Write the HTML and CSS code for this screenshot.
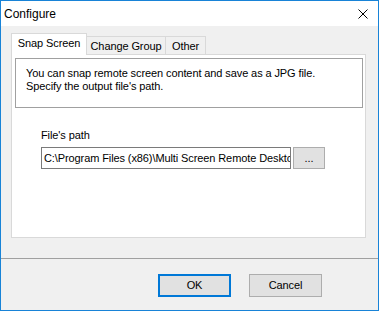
FILE: index.html
```html
<!DOCTYPE html>
<html lang="en">
<head>
    <meta charset="UTF-8">
    <title>Configure</title>
    <link rel="stylesheet" href="styles.css">
</head>
<body>
    <div class="window">
        <div class="titlebar">
            <span class="title">Configure</span>
            <svg class="close" width="10" height="10" viewBox="0 0 10 10">
                <path d="M0.5 0.5 L9.5 9.5 M9.5 0.5 L0.5 9.5" stroke="#000" stroke-width="1" fill="none"/>
            </svg>
        </div>
        <div class="client">
            <div class="tabs">
                <div class="tab active">Snap Screen</div>
                <div class="tab tab-change">Change Group</div>
                <div class="tab tab-other">Other</div>
            </div>
            <div class="panel">
                <div class="info">
                    <p>You can snap remote screen content and save as a JPG file.</p>
                    <p>Specify the output file's path.</p>
                </div>
                <div class="field">
                    <label>File's path</label>
                    <div class="field-row">
                        <div class="input">C:\Program Files (x86)\Multi Screen Remote Deskto</div>
                        <div class="btn btn-browse">...</div>
                    </div>
                </div>
            </div>
        </div>
        <div class="footer">
            <div class="btn btn-ok">OK</div>
            <div class="btn btn-cancel">Cancel</div>
        </div>
    </div>
</body>
</html>
```

FILE: styles.css
```css
* {
    margin: 0;
    box-sizing: border-box;
}

body {
    font-family: 'Liberation Sans', Arial, sans-serif;
    font-size: 11px;
    letter-spacing: -0.1px;
    color: #000;
    background: #fff;
}

.window {
    width: 379px;
    height: 311px;
    border: 1px solid #1883d7;
    background: #f0f0f0;
    display: flex;
    flex-direction: column;
}

.titlebar {
    height: 25px;
    background: #fff;
    display: flex;
    align-items: center;
    justify-content: space-between;
    padding: 0 10px 0 3px;
}

.title {
    font-size: 12px;
    letter-spacing: 0;
    line-height: 14px;
}

.close {
    display: block;
}

.client {
    padding: 6px 12px 0 10px;
}

.tabs {
    display: flex;
    align-items: flex-end;
    height: 22px;
    position: relative;
    z-index: 1;
}

.tab {
    height: 18px;
    border: 1px solid #d9d9d9;
    border-bottom: none;
    background: #f0f0f0;
    line-height: 18px;
    white-space: nowrap;
    text-align: center;
}

.tab.active {
    height: 22px;
    width: 76px;
    margin-bottom: -1px;
    background: #fff;
    line-height: 19px;
}

.tab-change {
    width: 79px;
    border-left: none;
}

.tab-other {
    width: 40px;
    border-left: none;
}

.panel {
    height: 184px;
    border: 1px solid #d9d9d9;
    background: #fff;
    padding: 3px 2px 0 3px;
}

.info {
    height: 50px;
    border: 1px solid #a0a0a0;
    padding: 8px 0 0 10px;
    line-height: 13px;
}

.field {
    padding-left: 26px;
    margin-top: 20px;
}

.field label {
    display: block;
    line-height: 14px;
    margin-bottom: 5px;
}

.field-row {
    display: flex;
    gap: 2px;
}

.input {
    width: 250px;
    height: 22px;
    border: 1px solid #7a7a7a;
    line-height: 20px;
    padding-left: 2px;
    white-space: nowrap;
    overflow: hidden;
}

.btn {
    background: #e1e1e1;
    border: 1px solid #adadad;
    text-align: center;
}

.btn-browse {
    width: 32px;
    height: 22px;
    line-height: 20px;
}

.footer {
    margin-top: 20px;
    border-top: 1px solid #a0a0a0;
    flex: 1;
    display: flex;
    padding: 15px 0 0 157px;
    gap: 18px;
}

.btn-ok,
.btn-cancel {
    width: 73px;
    height: 23px;
    line-height: 21px;
}

.btn-ok {
    border: 2px solid #0078d7;
    line-height: 19px;
}
```
